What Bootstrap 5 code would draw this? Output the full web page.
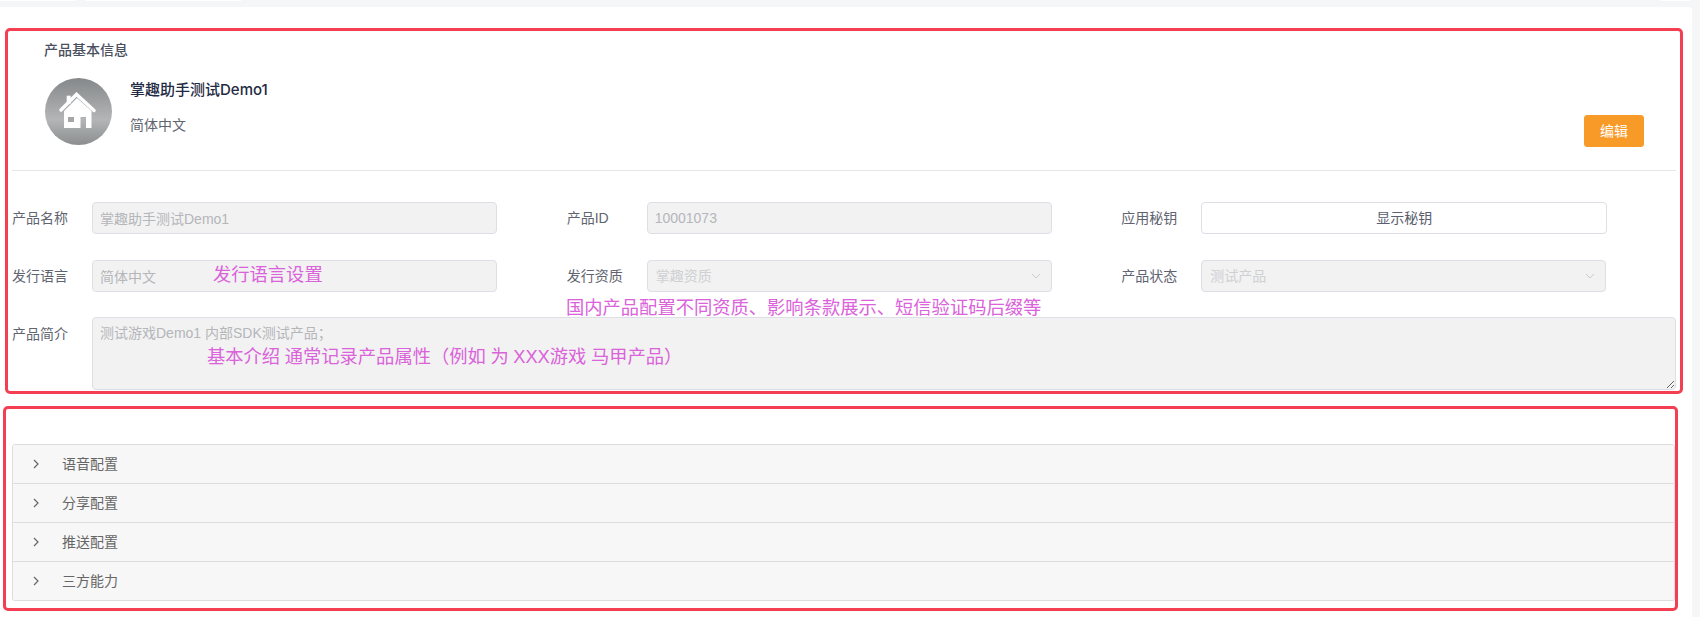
<!DOCTYPE html>
<html lang="zh-CN">
<head>
<meta charset="utf-8">
<title>产品基本信息</title>
<link rel="stylesheet" href="https://cdn.jsdelivr.net/npm/bootstrap@5.3.0/dist/css/bootstrap.min.css">
<style>
html,body{height:100%;overflow:hidden}
body{background:#f5f6f8;font-family:"Liberation Sans","Noto Sans CJK SC",sans-serif;font-size:14px;color:#5a5e66;line-height:21px}
.tab-strip{height:7px;align-items:flex-start}
.tab-strip i{display:block;height:1px;background:#fff}
.tab-a{width:76px}.tab-b{width:156px;margin-left:9px}.tab-c{width:30px;margin-left:auto;margin-right:10px}
.page-sheet{width:1692px;height:610px;background:#fff;border-radius:0 4px 0 0;padding-top:21px}
.note-frame{position:relative;border:3px solid #f43f52;border-radius:5px}
.frame-info{margin-left:5px;width:1678px;padding:9px 4px 1px}
.frame-config{margin:12px 0 0 3px;width:1675px;padding:35px 0 7px 6px}
.info-title{padding-left:32px;font-weight:500;color:#4a5060}
.profile-row{padding:17px 32px 23px 33px;height:109px}
.avatar-disc{width:67px;height:67px;border-radius:50%;background:linear-gradient(180deg,#85888a 0%,#b3b5b6 62%,#8b8e90 100%);flex:none}
.profile-text{margin-left:18px;padding-top:1px}
.profile-name{font-family:Inter,"Noto Sans CJK SC",sans-serif;font-size:15px;font-weight:500;color:#1f2a44}
.profile-lang{margin-top:15px;color:#5f6470}
.edit-btn{--bs-btn-bg:#f79a28;--bs-btn-border-color:#f79a28;--bs-btn-color:#fff;--bs-btn-hover-bg:#f79a28;--bs-btn-hover-border-color:#f79a28;--bs-btn-hover-color:#fff;--bs-btn-font-size:14px;--bs-btn-padding-x:0;--bs-btn-padding-y:0;--bs-btn-border-radius:3px;width:60px;height:32px;line-height:30px;margin-top:auto}
.info-rule{margin:0 0 31px;border-top:1px solid #e6e6e6;opacity:1}
.field-row{margin-bottom:26px}
.field-row.tight{margin-bottom:25px}
.field-label{width:80px;flex:none;color:#5f6470}
.field-box{width:405px;height:32px;flex:none;font-size:14px;padding:0 8px 0 7px;border:1px solid #dcdfe6;border-radius:4px;line-height:30px;box-shadow:none}
.form-control.field-box:disabled,.form-select.field-box:disabled{background-color:#f2f2f2;color:#b4b6ba;opacity:1}
.form-select.field-box{background-image:url("data:image/svg+xml,%3Csvg xmlns='http://www.w3.org/2000/svg' viewBox='0 0 10 6'%3E%3Cpath d='M1 1l4 4 4-4' fill='none' stroke='%23c8cace' stroke-width='1'/%3E%3C/svg%3E");background-size:10px 6px;background-position:right 10px center;padding:0 28px 0 8px}
.form-select.field-box:disabled{color:#cfd0d3}
.secret-btn{--bs-btn-color:#5a5e70;--bs-btn-border-color:#dcdfe6;--bs-btn-bg:#fff;--bs-btn-hover-bg:#fff;--bs-btn-hover-color:#5a5e70;--bs-btn-hover-border-color:#dcdfe6;--bs-btn-font-size:14px;--bs-btn-padding-y:0;--bs-btn-border-radius:4px;width:406px;height:32px;line-height:30px;flex:none}
.field-area{height:73px;padding:5px 7px;line-height:21px;font-size:14px;border:1px solid #dcdfe6;border-radius:4px;resize:vertical;box-shadow:none}
.form-control.field-area:disabled{background:#f2f2f2;color:#b4b6ba;opacity:1}
.area-label{padding-top:7px}
.note-text{position:absolute;font-size:18.3px;line-height:24px;color:#da62da;white-space:nowrap}
.note-lang{left:205px;top:232px}
.note-cert{left:558px;top:265px}
.note-desc{left:199px;top:314px;word-spacing:-.5px}
.config-accordion{--bs-accordion-border-color:#ddd;--bs-accordion-border-radius:3px;--bs-accordion-inner-border-radius:2px;--bs-accordion-btn-bg:#f7f7f7;--bs-accordion-active-bg:#f7f7f7;--bs-accordion-bg:#f7f7f7;--bs-accordion-btn-color:#666;--bs-accordion-active-color:#666;--bs-accordion-btn-padding-x:0;--bs-accordion-btn-padding-y:0;--bs-accordion-btn-focus-box-shadow:none}
.config-accordion .accordion-button{height:38px;font-size:14px;padding-left:20px;line-height:21px}
.config-accordion .accordion-button::after{display:none}
.chevron-mark{width:6px;height:10px;margin-right:23px;flex:none}
</style>
</head>
<body>
<div class="tab-strip d-flex"><i class="tab-a"></i><i class="tab-b"></i><i class="tab-c"></i></div>
<main class="page-sheet">
  <section class="note-frame frame-info">
    <div class="info-title">产品基本信息</div>
    <div class="profile-row d-flex">
      <div class="avatar-disc d-flex align-items-center justify-content-center">
        <svg width="67" height="67" viewBox="0 0 67 67" aria-hidden="true">
          <path d="M16 32 31.5 16.5 49 32.5" fill="none" stroke="#fff" stroke-width="3.5" stroke-linecap="round"/>
          <rect x="21.7" y="17.7" width="4" height="8" fill="#fff"/>
          <path d="M32 20 19 33V50H35.5V39H41V50H46.5V33Z" fill="#fff"/>
          <rect x="23" y="39" width="6" height="5" fill="#a4a6a8"/>
        </svg>
      </div>
      <div class="profile-text">
        <div class="profile-name">掌趣助手测试Demo1</div>
        <div class="profile-lang">简体中文</div>
      </div>
      <button type="button" class="btn edit-btn ms-auto">编辑</button>
    </div>
    <hr class="info-rule">
    <div class="row g-0 field-row">
      <div class="col-4 d-flex align-items-center"><span class="field-label">产品名称</span><input class="form-control field-box" disabled value="掌趣助手测试Demo1"></div>
      <div class="col-4 d-flex align-items-center"><span class="field-label">产品ID</span><input class="form-control field-box" disabled value="10001073"></div>
      <div class="col-4 d-flex align-items-center"><span class="field-label">应用秘钥</span><button type="button" class="btn secret-btn">显示秘钥</button></div>
    </div>
    <div class="row g-0 field-row tight">
      <div class="col-4 d-flex align-items-center"><span class="field-label">发行语言</span><input class="form-control field-box" disabled value="简体中文"></div>
      <div class="col-4 d-flex align-items-center"><span class="field-label">发行资质</span><select class="form-select field-box" disabled><option>掌趣资质</option></select></div>
      <div class="col-4 d-flex align-items-center"><span class="field-label">产品状态</span><select class="form-select field-box" disabled><option>测试产品</option></select></div>
    </div>
    <div class="d-flex">
      <span class="field-label area-label">产品简介</span>
      <textarea class="form-control field-area" disabled>测试游戏Demo1 内部SDK测试产品；</textarea>
    </div>
    <div class="note-text note-lang">发行语言设置</div>
    <div class="note-text note-cert">国内产品配置不同资质、影响条款展示、短信验证码后缀等</div>
    <div class="note-text note-desc">基本介绍 通常记录产品属性（例如 为 XXX游戏 马甲产品）</div>
  </section>
  <section class="note-frame frame-config">
    <div class="accordion config-accordion">
      <div class="accordion-item"><button type="button" class="accordion-button collapsed"><svg class="chevron-mark" viewBox="0 0 6 10" aria-hidden="true"><path d="M1 1l4 4-4 4" fill="none" stroke="#666" stroke-width="1.2"/></svg>语音配置</button></div>
      <div class="accordion-item"><button type="button" class="accordion-button collapsed"><svg class="chevron-mark" viewBox="0 0 6 10" aria-hidden="true"><path d="M1 1l4 4-4 4" fill="none" stroke="#666" stroke-width="1.2"/></svg>分享配置</button></div>
      <div class="accordion-item"><button type="button" class="accordion-button collapsed"><svg class="chevron-mark" viewBox="0 0 6 10" aria-hidden="true"><path d="M1 1l4 4-4 4" fill="none" stroke="#666" stroke-width="1.2"/></svg>推送配置</button></div>
      <div class="accordion-item"><button type="button" class="accordion-button collapsed"><svg class="chevron-mark" viewBox="0 0 6 10" aria-hidden="true"><path d="M1 1l4 4-4 4" fill="none" stroke="#666" stroke-width="1.2"/></svg>三方能力</button></div>
    </div>
  </section>
</main>
<script src="https://cdn.jsdelivr.net/npm/bootstrap@5.3.0/dist/js/bootstrap.bundle.min.js"></script>
</body>
</html>
